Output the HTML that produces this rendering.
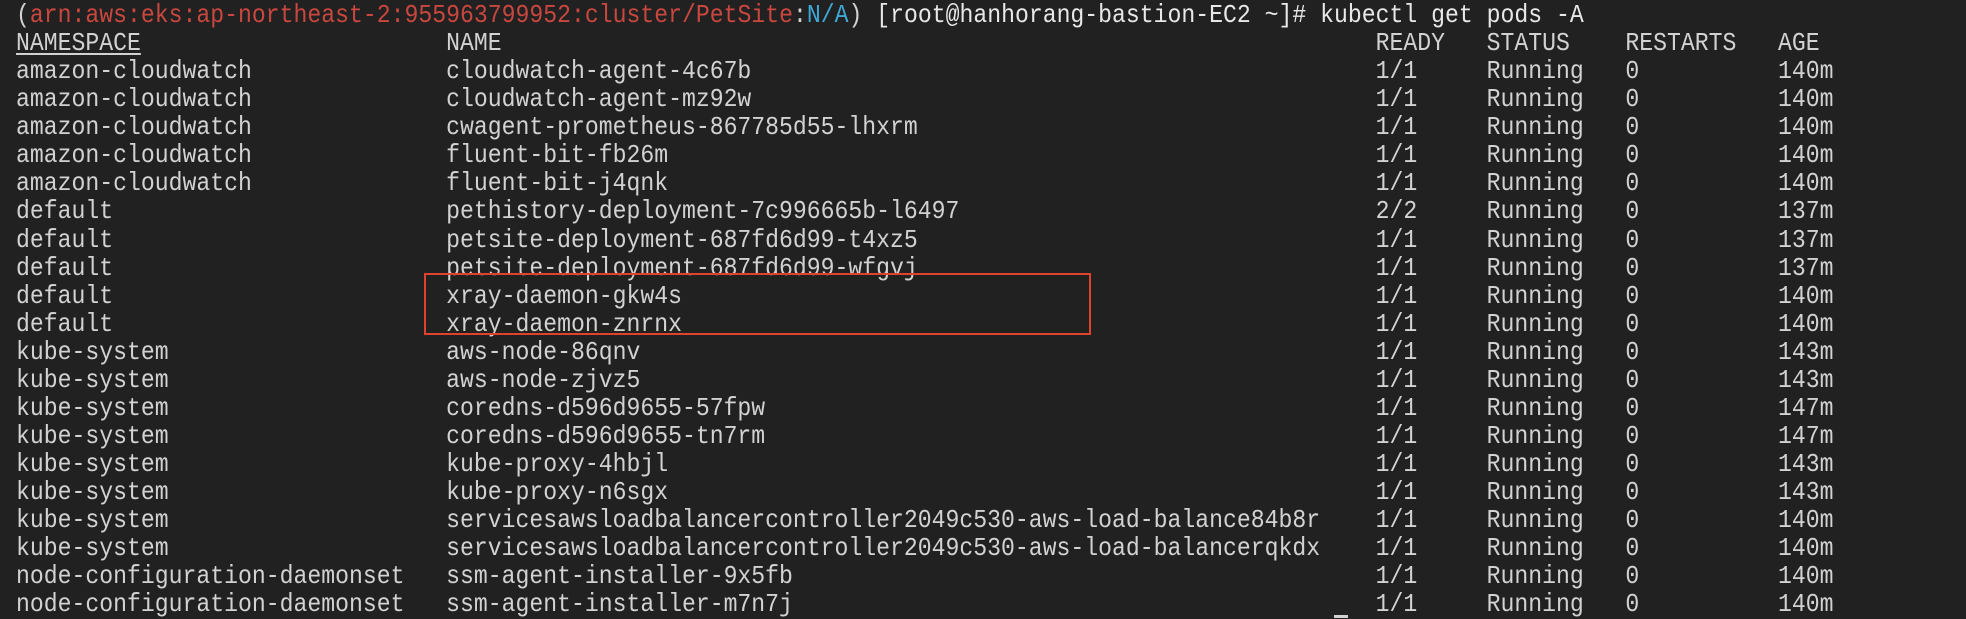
<!DOCTYPE html>
<html><head><meta charset="utf-8"><style>
html,body{margin:0;padding:0;background:#212121;width:1966px;height:618px;overflow:hidden}
pre{margin:0;position:absolute;left:16px;top:1px;font-family:"Liberation Mono","DejaVu Sans Mono",monospace;font-size:26px;line-height:28.07px;color:#d2d2d2;transform:scaleX(0.8892);transform-origin:0 0;white-space:pre}
.r{color:#c9473f}.c{color:#3ea8d6}.w{color:#e8e8e8}
u{text-decoration:underline;text-underline-offset:3px;text-decoration-thickness:2px}
.box{position:absolute;left:424px;top:273px;width:667px;height:62px;border:2px solid #e0432b;box-sizing:border-box}
.cur{position:absolute;left:1334px;top:615px;width:14px;height:3px;background:#d2d2d2}
</style></head><body>
<pre>(<span class="r">arn:aws:eks:ap-northeast-2:955963799952:cluster/PetSite</span>:<span class="c">N/A</span>) <span class="w">[root@hanhorang-bastion-EC2 ~]# kubectl get pods -A</span>
<u>NAMESPACE</u>                      NAME                                                               READY   STATUS    RESTARTS   AGE
amazon-cloudwatch              cloudwatch-agent-4c67b                                             1/1     Running   0          140m
amazon-cloudwatch              cloudwatch-agent-mz92w                                             1/1     Running   0          140m
amazon-cloudwatch              cwagent-prometheus-867785d55-lhxrm                                 1/1     Running   0          140m
amazon-cloudwatch              fluent-bit-fb26m                                                   1/1     Running   0          140m
amazon-cloudwatch              fluent-bit-j4qnk                                                   1/1     Running   0          140m
default                        pethistory-deployment-7c996665b-l6497                              2/2     Running   0          137m
default                        petsite-deployment-687fd6d99-t4xz5                                 1/1     Running   0          137m
default                        petsite-deployment-687fd6d99-wfgvj                                 1/1     Running   0          137m
default                        xray-daemon-gkw4s                                                  1/1     Running   0          140m
default                        xray-daemon-znrnx                                                  1/1     Running   0          140m
kube-system                    aws-node-86qnv                                                     1/1     Running   0          143m
kube-system                    aws-node-zjvz5                                                     1/1     Running   0          143m
kube-system                    coredns-d596d9655-57fpw                                            1/1     Running   0          147m
kube-system                    coredns-d596d9655-tn7rm                                            1/1     Running   0          147m
kube-system                    kube-proxy-4hbjl                                                   1/1     Running   0          143m
kube-system                    kube-proxy-n6sgx                                                   1/1     Running   0          143m
kube-system                    servicesawsloadbalancercontroller2049c530-aws-load-balance84b8r    1/1     Running   0          140m
kube-system                    servicesawsloadbalancercontroller2049c530-aws-load-balancerqkdx    1/1     Running   0          140m
node-configuration-daemonset   ssm-agent-installer-9x5fb                                          1/1     Running   0          140m
node-configuration-daemonset   ssm-agent-installer-m7n7j                                          1/1     Running   0          140m</pre>
<div class="box"></div>
<div class="cur"></div>
</body></html>
